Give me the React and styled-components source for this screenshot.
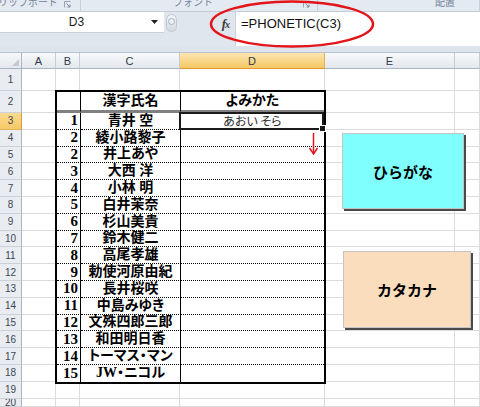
import React from 'react';
import styled, { createGlobalStyle } from 'styled-components';

const Global = createGlobalStyle`
  html, body { margin: 0; padding: 0; background: #fff; }
  body { font-family: "Liberation Sans", "Noto Sans CJK JP", sans-serif; }
`;

const Page = styled.div`
  position: relative;
  width: 480px;
  height: 407px;
  overflow: hidden;
  display: flex;
  flex-direction: column;
  background: #fff;
`;

/* ---------- ribbon strip ---------- */
const Ribbon = styled.div`
  flex: none;
  height: 11px;
  display: grid;
  grid-template-columns: 81px 237px 1fr;
  background: #e4eaf2;
  border-bottom: 1px solid #c3ccd8;
  overflow: hidden;
`;

const RibbonGroup = styled.div`
  display: flex;
  align-items: flex-start;
  justify-content: ${p => p.$justify};
  padding: ${p => p.$pad};
  gap: 6px;
  border-right: 1px solid #c6cfdb;
  overflow: hidden;
  white-space: nowrap;
`;

const RibbonLabel = styled.span`
  font-family: "Noto Sans CJK JP", sans-serif;
  font-size: 10px;
  line-height: 10px;
  margin-top: -3px;
  color: #77859a;
`;

const Launcher = styled.svg`
  flex: none;
  width: 7px;
  height: 7px;
  margin-top: 1px;
`;

/* ---------- formula bar ---------- */
const FormulaBar = styled.div`
  flex: none;
  height: 34px;
  display: flex;
  align-items: flex-start;
  background: #dfe6ee;
`;

const NameBox = styled.div`
  width: 164px;
  height: 21px;
  display: flex;
  align-items: center;
  background: #fff;
  border-bottom: 1px solid #c9d1db;
  box-sizing: border-box;
`;

const NameText = styled.span`
  flex: 1;
  text-align: center;
  font-size: 12px;
  color: #1d1d1d;
  padding-left: 2px;
`;

const DropArrow = styled.svg`
  width: 7px;
  height: 4px;
  margin-right: 6px;
`;

const Grip = styled.div`
  width: 11px;
  height: 18px;
  margin: 2px 0 0 2px;
  border-radius: 6px;
  background: linear-gradient(#f3f5f8, #d3d9e1);
  border: 1px solid #c1c8d1;
  display: flex;
  justify-content: center;
  padding-top: 3px;
  box-sizing: border-box;
`;

const GripDot = styled.div`
  width: 5px;
  height: 5px;
  border-radius: 50%;
  border: 1px solid #a9b2bd;
  background: #eef1f5;
`;

const FxArea = styled.div`
  width: 58px;
  height: 24px;
  display: flex;
  align-items: center;
  justify-content: flex-end;
  padding-right: 6px;
  box-sizing: border-box;
`;

const Fx = styled.span`
  font-family: "Liberation Serif", serif;
  font-style: italic;
  font-weight: 700;
  font-size: 13px;
  color: #3a3a3a;
  letter-spacing: -1px;
`;

const FxSmall = styled.span`
  font-size: 10px;
`;

const FormulaInput = styled.div`
  flex: 1;
  height: 34px;
  background: #fff;
  border-left: 1px solid #c9d1db;
  padding-left: 5px;
  font-size: 13px;
  line-height: 24px;
  color: #111;
`;

const Band = styled.div`
  flex: none;
  height: 6px;
  background: #dde4ec;
  border-bottom: 1px solid #b8c2ce;
`;

/* ---------- sheet ---------- */
const Sheet = styled.div`
  flex: 1;
  display: grid;
  grid-template-columns: 22px 34px 24px 100px 145px 130px 1fr;
  grid-template-rows: 16px 22px 22px repeat(17, 16.8px) 1fr;
  min-height: 0;
`;

const Corner = styled.div`
  position: relative;
  background: linear-gradient(#f7f8fa, #e4e8ed);
  border-right: 1px solid #a9b5c3;
  border-bottom: 1px solid #a9b5c3;
  box-sizing: border-box;
  display: flex;
  align-items: flex-end;
  justify-content: flex-end;
  padding: 0 2px 2px 0;
`;

const CornerTri = styled.div`
  width: 0;
  height: 0;
  border-left: 7px solid transparent;
  border-bottom: 7px solid #c3c9d1;
`;

const ColHeader = styled.div`
  background: ${p => p.$active
    ? 'linear-gradient(#fce6b0, #f6c866)'
    : 'linear-gradient(#f8f9fb, #e3e7ec)'};
  border-right: 1px solid ${p => (p.$active ? '#e2b45a' : '#c4cbd4')};
  border-bottom: 1px solid ${p => (p.$active ? '#e19a32' : '#a9b5c3')};
  box-sizing: border-box;
  display: flex;
  align-items: center;
  justify-content: center;
  font-size: 11px;
  color: #2f3a48;
`;

const RowHeader = styled.div`
  background: ${p => p.$active
    ? 'linear-gradient(#fbdc92, #f6c866)'
    : '#e9edf2'};
  border-right: 1px solid ${p => (p.$active ? '#e19a32' : '#a9b5c3')};
  border-bottom: 1px solid ${p => (p.$active ? '#e2b45a' : '#cbd1d9')};
  box-sizing: border-box;
  display: flex;
  align-items: center;
  justify-content: center;
  font-size: 10px;
  color: #3d4650;
  overflow: hidden;
`;

const Cell = styled.div`
  border-right: 1px solid #dadcdd;
  border-bottom: 1px solid #dadcdd;
  box-sizing: border-box;
  background: #fff;
`;

const Table = styled.div`
  grid-column: 3 / 6;
  grid-row: 3 / 20;
  margin: -1px -1px -2px -1px;
  border: 2px solid #000;
  display: grid;
  grid-template-columns: 24px 100px 1fr;
  grid-template-rows: 21px repeat(16, 1fr);
  background: #fff;
  position: relative;
  z-index: 1;
  font-family: "Liberation Serif", "Noto Sans CJK JP", serif;
  font-weight: 700;
  font-feature-settings: "palt";
  color: #000;
`;

const TCell = styled.div`
  position: relative;
  border-right: ${p => (p.$sep ? '1px solid #000' : 'none')};
  border-bottom: ${p => (p.$head ? '3px solid #808080' : p.$last ? 'none' : '1px dotted #000')};
  box-sizing: border-box;
  display: flex;
  align-items: center;
  justify-content: ${p => (p.$num ? 'flex-end' : 'center')};
  padding-right: ${p => (p.$num ? '2px' : '0')};
  font-size: ${p => (p.$num ? '15px' : '14px')};
  line-height: 1;
  white-space: nowrap;
`;

const Reading = styled.span`
  font-family: "Noto Sans CJK JP", sans-serif;
  font-weight: 400;
  font-size: 12px;
  color: #2a2a2a;
`;

const Selection = styled.div`
  position: absolute;
  top: -1px;
  left: -2px;
  right: 0;
  bottom: -1px;
  border: 2px solid #1a1a1a;
  pointer-events: none;
`;

const FillHandle = styled.div`
  position: absolute;
  right: -4px;
  bottom: -4px;
  width: 5px;
  height: 5px;
  background: #1a1a1a;
  border: 1px solid #fff;
`;

/* ---------- floating shapes ---------- */
const Shape = styled.div`
  position: absolute;
  left: ${p => p.$x}px;
  top: ${p => p.$y}px;
  width: ${p => p.$w}px;
  height: ${p => p.$h}px;
  box-sizing: border-box;
  background: ${p => p.$bg};
  border: 1px solid #c4c4c4;
  box-shadow: 2px 2px 0 #4a4a4a;
  display: flex;
  align-items: center;
  justify-content: center;
  font-family: "Noto Sans CJK JP", sans-serif;
  font-weight: 700;
  font-size: 15px;
  color: #000;
  z-index: 2;
`;

const Overlay = styled.svg`
  position: absolute;
  left: ${p => p.$x}px;
  top: ${p => p.$y}px;
  z-index: 3;
  pointer-events: none;
`;

const data = [
  ['1', '青井 空'],
  ['2', '綾小路黎子'],
  ['2', '井上あや'],
  ['3', '大西 洋'],
  ['4', '小林 明'],
  ['5', '白井茉奈'],
  ['6', '杉山美貴'],
  ['7', '鈴木健二'],
  ['8', '高尾孝雄'],
  ['9', '勅使河原由紀'],
  ['10', '長井桜咲'],
  ['11', '中島みゆき'],
  ['12', '文殊四郎三郎'],
  ['13', '和田明日香'],
  ['14', 'トーマス・マン'],
  ['15', 'JW・ニコル'],
];

const cols = ['A', 'B', 'C', 'D', 'E', ''];

function LauncherIcon() {
  return (
    <Launcher viewBox="0 0 7 7">
      <path d="M0.5 6.5V0.5H6.5" fill="none" stroke="#9aa6b5" strokeWidth="1" />
      <path d="M2.5 2.5L6 6M6 3.5V6H3.5" fill="none" stroke="#7d8a9b" strokeWidth="1" />
    </Launcher>
  );
}

export default function App() {
  const rows = [];
  for (let r = 1; r <= 20; r++) {
    const inTable = r >= 2 && r <= 18;
    rows.push(
      <React.Fragment key={r}>
        <RowHeader $active={r === 3}>{r}</RowHeader>
        <Cell />
        {!inTable && (
          <>
            <Cell />
            <Cell />
            <Cell />
          </>
        )}
        <Cell />
        <Cell />
      </React.Fragment>
    );
  }

  return (
    <>
      <Global />
      <Page>
        <Ribbon>
          <RibbonGroup $justify="flex-end" $pad="0 9px 0 0">
            <RibbonLabel>クリップボード</RibbonLabel>
            <LauncherIcon />
          </RibbonGroup>
          <RibbonGroup $justify="flex-end" $pad="0 7px 0 0">
            <RibbonLabel style={{ marginRight: 84 }}>フォント</RibbonLabel>
            <LauncherIcon />
          </RibbonGroup>
          <RibbonGroup $justify="flex-start" $pad="0 0 0 117px">
            <RibbonLabel>配置</RibbonLabel>
          </RibbonGroup>
        </Ribbon>

        <FormulaBar>
          <NameBox>
            <NameText>D3</NameText>
            <DropArrow viewBox="0 0 7 4">
              <path d="M0 0H7L3.5 4Z" fill="#222" />
            </DropArrow>
          </NameBox>
          <Grip>
            <GripDot />
          </Grip>
          <FxArea>
            <Fx>
              f<FxSmall>x</FxSmall>
            </Fx>
          </FxArea>
          <FormulaInput>=PHONETIC(C3)</FormulaInput>
        </FormulaBar>
        <Band />

        <Sheet>
          <Corner>
            <CornerTri />
          </Corner>
          {cols.map((c, i) => (
            <ColHeader key={i} $active={c === 'D'}>
              {c}
            </ColHeader>
          ))}

          <Table>
            <TCell $sep $head />
            <TCell $sep $head>漢字氏名</TCell>
            <TCell $head>よみかた</TCell>
            {data.map(([n, name], i) => {
              const last = i === data.length - 1;
              return (
                <React.Fragment key={i}>
                  <TCell $sep $num $last={last}>{n}</TCell>
                  <TCell $sep $last={last}>{name}</TCell>
                  <TCell $last={last}>
                    {i === 0 && (
                      <>
                        <Reading>あおい そら</Reading>
                        <Selection>
                          <FillHandle />
                        </Selection>
                      </>
                    )}
                  </TCell>
                </React.Fragment>
              );
            })}
          </Table>

          {rows}
        </Sheet>

        <Shape $x={342} $y={133} $w={122} $h={76} $bg="#80ffff">
          ひらがな
        </Shape>
        <Shape $x={343} $y={251} $w={128} $h={77} $bg="#f9ddbc">
          カタカナ
        </Shape>

        <Overlay $x={209} $y={0} width="168" height="49" viewBox="0 0 168 49">
          <ellipse cx="83" cy="24" rx="81" ry="22.5" fill="none" stroke="#e3151a" strokeWidth="2.5" />
        </Overlay>

        <Overlay $x={308} $y={132} width="11" height="24" viewBox="0 0 11 24">
          <path d="M5.5 1V22" stroke="#e3151a" strokeWidth="1.5" fill="none" />
          <path d="M1.5 16L5.5 22L9.5 16" stroke="#e3151a" strokeWidth="1.5" fill="none" />
        </Overlay>
      </Page>
    </>
  );
}
